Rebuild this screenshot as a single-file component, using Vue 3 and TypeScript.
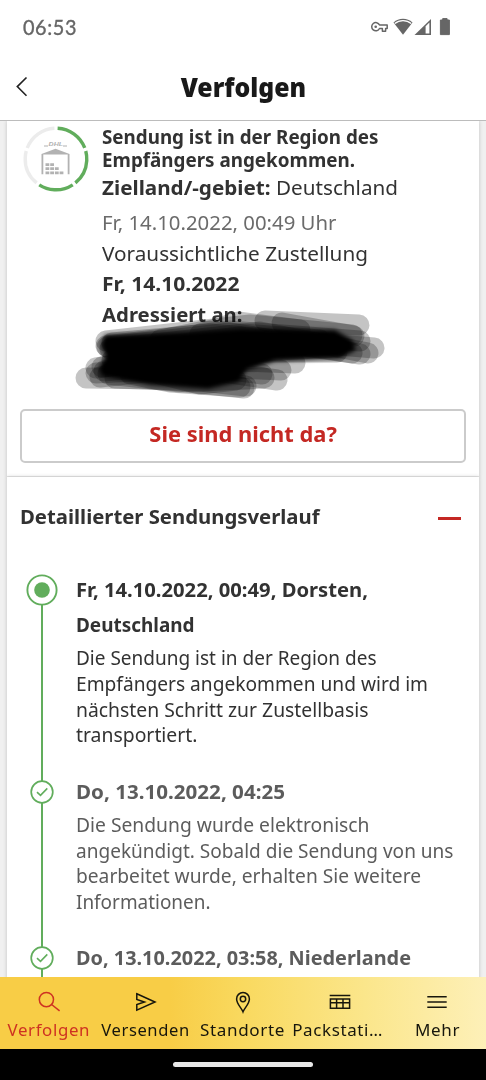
<script setup lang="ts">
import type { Directive } from 'vue'

interface TimelineLine { text: string; width: number }
interface TimelineEntry {
  current: boolean
  heading: TimelineLine[]
  body: TimelineLine[]
}

// Condenses or widens a single line of text to the given width.
const vFit: Directive<HTMLElement, number> = {
  mounted(el, binding) {
    const exact = el.getBoundingClientRect().width
    if (exact > 0) {
      el.style.transform = `scaleX(${binding.value / exact})`
    }
  },
}

const entries: TimelineEntry[] = [
  {
    current: true,
    heading: [
      { text: 'Fr, 14.10.2022, 00:49, Dorsten,', width: 292 },
      { text: 'Deutschland', width: 118.5 },
    ],
    body: [
      { text: 'Die Sendung ist in der Region des', width: 300.5 },
      { text: 'Empfängers angekommen und wird im', width: 352 },
      { text: 'nächsten Schritt zur Zustellbasis', width: 292.5 },
      { text: 'transportiert.', width: 121.5 },
    ],
  },
  {
    current: false,
    heading: [{ text: 'Do, 13.10.2022, 04:25', width: 209 }],
    body: [
      { text: 'Die Sendung wurde elektronisch', width: 293.5 },
      { text: 'angekündigt. Sobald die Sendung von uns', width: 377.5 },
      { text: 'bearbeitet wurde, erhalten Sie weitere', width: 345 },
      { text: 'Informationen.', width: 134.5 },
    ],
  },
  {
    current: false,
    heading: [{ text: 'Do, 13.10.2022, 03:58, Niederlande', width: 335 }],
    body: [],
  },
]

const strokes: string[] = [
  'M265 321 L359 325', 'M282 323 L354 336', 'M106 341 L250 325 L352 335',
  'M106 346 L230 331 L360 341', 'M112 343 L210 334 L374 348', 'M110 349 L260 332 L368 353',
  'M118 352 L240 337 L360 354', 'M107 347 L230 333 L352 353', 'M112 360 L230 352 L337 352',
  'M102 367 L220 353 L337 347', 'M104 371 L210 360 L295 363', 'M96 373 L210 367 L281 370',
  'M86 378 L160 379 L244 388', 'M100 377 L190 367 L277 380', 'M108 374 L180 382 L264 378',
  'M115 378 L200 381 L246 386', 'M130 374 L170 382 L240 387', 'M160 374 L200 384 L236 380',
  'M200 334 L238 322 L300 330', 'M160 340 L205 331 L320 340', 'M96 368 L150 360 L262 374',
]
</script>

<template>
  <div class="screen">
    <header class="top">
      <div class="status">
        <span class="clock"><span v-fit="54" class="fit">06:53</span></span>
        <svg class="status-icons" width="82" height="20" viewBox="370 17 82 20">
          <path d="M379.5 24.9 H387.2 V28.5 H385.6 V31.2 H382.4 V28.5 H379.5 A4.1 4.1 0 1 1 379.5 24.9 Z" fill="none" stroke="#666" stroke-width="1.5" stroke-linejoin="round" />
          <circle cx="375.7" cy="26.7" r="1.3" fill="#666" />
          <path d="M393.5 22.4 A14.5 14.5 0 0 1 412.5 22.4 L403 34.7 Z" fill="#666" />
          <path d="M394.8 23.6 A12.6 12.6 0 0 1 411.2 23.6" fill="none" stroke="#fff" stroke-width="1.3" />
          <path d="M414.5 35 L431 19 V35 Z" fill="#666" />
          <path d="M425.6 26.3 L429.4 22.6 V33.5 H425.6 Z" fill="#fff" />
          <path d="M440.4 20 h2.3 v-1.4 h4.4 v1.4 h2.3 v14.6 h-9 z" fill="#666" stroke="#666" stroke-linejoin="round" stroke-width="1" />
        </svg>
      </div>
      <div class="titlebar">
        <svg class="back" width="14" height="22" viewBox="0 0 14 22">
          <path d="M11.5 1.5 L2.3 10.6 L11.5 19.8" fill="none" stroke="#222" stroke-width="1.6" />
        </svg>
        <h1><span v-fit="125.5" class="fit mid">Verfolgen</span></h1>
      </div>
    </header>

    <main class="page">
      <section class="card summary">
        <div class="overview">
          <svg class="ring" width="68" height="68" viewBox="-34 -34 68 68">
            <g fill="none" stroke-width="3.4" transform="rotate(-87)">
              <circle r="30.8" pathLength="360" stroke="#61ad5c" stroke-dasharray="66 6 66 6 66 150" />
              <circle r="30.8" pathLength="360" stroke="#ececec" stroke-dasharray="0 216 66 6 66 6" />
            </g>
            <g fill="#b2b2b2">
              <path d="M-14.5 15.3 V-5 L-.5 -10.2 L13.5 -5 V15.3 H11.7 V-4.6 H-12.7 V15.3 Z" />
              <path d="M-10.5 4.3h3.8v2.8h-3.8zM-5.8 4.3h3.8v2.8h-3.8zM-10.5 8.3h3.8v2.8h-3.8zM-5.8 8.3h3.8v2.8h-3.8zM-1.1 8.3h3.8v2.8h-3.8zM-10.5 12.4h3.8v2.8h-3.8zM-5.8 12.4h3.8v2.8h-3.8zM-1.1 12.4h3.8v2.8h-3.8zM3.6 12.4h3.8v2.8h-3.8z" />
              <text x="-.2" y="-12.6" class="mark" text-anchor="middle" textLength="14.5" lengthAdjust="spacingAndGlyphs">DHL</text>
              <path d="M-12 -13.4h4v.9h-4zM7 -13.4h4v.9h-4z" />
            </g>
          </svg>
          <div class="facts">
            <p class="strong state"><span v-fit="276.5" class="fit">Sendung ist in der Region des</span></p>
            <p class="strong state"><span v-fit="253" class="fit">Empfängers angekommen.</span></p>
            <p class="target"><span v-fit="296" class="fit"><b>Zielland/-gebiet:</b> Deutschland</span></p>
            <p class="fact grey"><span v-fit="234.5" class="fit">Fr, 14.10.2022, 00:49 Uhr</span></p>
            <p class="fact"><span v-fit="266" class="fit">Voraussichtliche Zustellung</span></p>
            <p class="fact strong"><span v-fit="137.5" class="fit">Fr, 14.10.2022</span></p>
            <p class="fact strong"><span v-fit="140.5" class="fit">Adressiert an:</span></p>
          </div>
          <svg class="scribble" width="320" height="96" viewBox="70 308 320 96">
            <path v-for="(d, i) in strokes" :key="i" :d="d" />
            <path class="core" d="M105 335 L190 332 L240 329 L335 330 L352 340 L356 350 L340 358 L275 361 L247 370 L238 382 L208 389 L150 385 L102 376 L99 368 L106 356 L101 345 Z" />
          </svg>
        </div>
        <button class="away" type="button"><span v-fit="187.5" class="fit mid">Sie sind nicht da?</span></button>
      </section>

      <section class="card history">
        <div class="history-head">
          <h2><span v-fit="299.5" class="fit">Detaillierter Sendungsverlauf</span></h2>
          <span class="minus"></span>
        </div>
        <ol class="timeline">
          <li v-for="(entry, i) in entries" :key="i" :class="{ current: entry.current }">
            <div class="rail">
              <svg v-if="entry.current" width="32" height="32" viewBox="0 0 32 32">
                <circle cx="16" cy="16" r="14.6" fill="#fff" stroke="#61ad5c" stroke-width="1.9" />
                <circle cx="16" cy="16" r="7.8" fill="#61ad5c" />
              </svg>
              <svg v-else width="24" height="24" viewBox="0 0 24 24">
                <circle cx="12" cy="12" r="10.8" fill="#fff" stroke="#61ad5c" stroke-width="1.7" />
                <path d="M7 12.2 L10.5 15.4 L17.3 8.4" fill="none" stroke="#61ad5c" stroke-width="1.6" />
              </svg>
            </div>
            <div class="event">
              <p v-for="line in entry.heading" :key="line.text" class="when"><span v-fit="line.width" class="fit">{{ line.text }}</span></p>
              <div class="details">
                <p v-for="line in entry.body" :key="line.text" class="what"><span v-fit="line.width" class="fit">{{ line.text }}</span></p>
              </div>
            </div>
          </li>
        </ol>
      </section>
    </main>

    <nav class="tabs">
      <a class="tab active">
        <svg width="24" height="24" viewBox="0 0 24 24"><g fill="none" stroke="currentColor" stroke-width="1.5"><circle cx="9.4" cy="9.6" r="7.1" /><path d="M14.6 14.5 L22.6 20.9" /></g></svg>
        <span v-fit="82.5" class="fit mid">Verfolgen</span>
      </a>
      <a class="tab">
        <svg width="24" height="24" viewBox="0 0 24 24"><path d="M2.8 3.8 L21 12 L2.8 20.2 V14.6 L10.5 12 L2.8 9.4 Z" fill="none" stroke="currentColor" stroke-width="1.5" /></svg>
        <span v-fit="88.5" class="fit mid">Versenden</span>
      </a>
      <a class="tab">
        <svg width="24" height="24" viewBox="0 0 24 24"><g fill="none" stroke="currentColor" stroke-width="1.5"><path d="M12 21.8 C10.6 18 5.6 13.8 5.6 8.9 a6.4 6.4 0 0 1 12.8 0 C18.4 13.8 13.4 18 12 21.8 Z" /><circle cx="12" cy="9" r="2.7" /></g></svg>
        <span v-fit="85" class="fit mid">Standorte</span>
      </a>
      <a class="tab clipped">
        <svg width="24" height="24" viewBox="0 0 24 24"><path d="M1.7 5.6 H22.3 M2.4 9 H21.6 V18.3 H2.4 Z M2.4 12.8 H21.6 M8.6 9 V18.3 M15 9 V18.3" fill="none" stroke="currentColor" stroke-width="1.5" /></svg>
        <span v-fit="91" class="fit mid">Packstati…</span>
      </a>
      <a class="tab">
        <svg width="24" height="24" viewBox="0 0 24 24"><path d="M2.3 6.7 H21.7 M2.3 12 H21.7 M2.3 17.3 H21.7" fill="none" stroke="currentColor" stroke-width="1.4" /></svg>
        <span v-fit="45" class="fit mid">Mehr</span>
      </a>
    </nav>
    <div class="gesture"><span class="pill"></span></div>
  </div>
</template>

<style>
body {
  margin: 0;
  background: #000;
}
</style>

<style scoped>
.screen {
  width: 486px;
  height: 1080px;
  display: flex;
  flex-direction: column;
  overflow: hidden;
  background: #fff;
  color: #323232;
  font-family: "Noto Sans", "Open Sans", sans-serif;
  font-size: 20px;
}
.screen * { box-sizing: border-box; }
p, h1, h2, ol { margin: 0; padding: 0; }
.fit {
  display: inline-block;
  white-space: nowrap;
  transform-origin: left center;
}
.mid { transform-origin: center; }
.top {
  flex: none;
  height: 121px;
  border-bottom: 1px solid #bcbcbc;
  background: #fff;
}
.status {
  height: 54px;
  padding: 0 34px 0 22.5px;
  display: flex;
  justify-content: space-between;
  align-items: center;
}
.clock {
  font-family: Lato, sans-serif;
  font-size: 20.5px;
  letter-spacing: 0.6px;
  color: #666;
  -webkit-text-stroke: 0.35px #666;
}
.titlebar {
  height: 66px;
  display: grid;
  grid-template-columns: 44px 1fr 44px;
  align-items: center;
}
.back { margin-left: 15px; }
h1 {
  text-align: center;
  font-size: 27px;
  line-height: 40px;
  font-weight: 900;
  color: #191919;
}
.page {
  flex: none;
  height: 855.5px;
  padding: 0 7px;
  overflow: hidden;
  background: #f0f0f0;
}
.card {
  background: #fff;
  box-shadow: 0 0 4px rgba(0, 0, 0, 0.2);
}
.summary {
  height: 355.5px;
  padding: 5px 13px 0;
  border-bottom: 1px solid #e6e6e6;
}
.overview {
  position: relative;
  height: 282.5px;
  display: flex;
}
.ring {
  flex: none;
  margin: -1.5px 0 0 2.2px;
}
.mark {
  font: italic 900 5.4px "Liberation Sans", sans-serif;
}
.facts { padding-left: 11.6px; }
.strong { font-weight: 700; }
.state {
  font-size: 18.8px;
  line-height: 23.3px;
  height: 23.3px;
}
.target {
  line-height: 30px;
  height: 35.3px;
}
.fact {
  line-height: 30.7px;
  height: 30.7px;
}
.grey { color: #6b6b6b; }
.scribble {
  position: absolute;
  left: 50px;
  top: 182px;
}
.scribble path {
  fill: none;
  stroke: rgba(0, 0, 0, 0.23);
  stroke-width: 21px;
  stroke-linecap: round;
  stroke-linejoin: round;
}
.scribble .core {
  fill: #000;
  stroke: none;
  filter: blur(2px);
}
.away {
  display: block;
  width: 446px;
  height: 54px;
  padding: 0 0 4px;
  border: 2px solid #cbcbcb;
  border-radius: 5px;
  background: #fff;
  color: #c42823;
  font: 700 21.5px "Noto Sans", sans-serif;
}
.history {
  height: 520px;
}
.history-head {
  height: 97px;
  padding: 25px 18px 0 13.4px;
  display: flex;
  align-items: flex-start;
  justify-content: space-between;
}
h2 {
  font-size: 20px;
  line-height: 30px;
  font-weight: 700;
}
.minus {
  width: 23px;
  height: 3px;
  margin-top: 15px;
  background: #c42823;
}
.timeline {
  list-style: none;
  padding-left: 19px;
}
.timeline li {
  display: flex;
  height: 166.5px;
  color: #5c5c5c;
}
.timeline li.current {
  height: 206px;
  color: #323232;
}
.rail {
  flex: none;
  width: 32px;
  display: flex;
  flex-direction: column;
  align-items: center;
  background: linear-gradient(#61ad5c, #61ad5c) center / 2.4px 100% no-repeat;
}
.current .rail { background-position: center 16px; }
.event {
  padding-left: 18px;
  margin-top: -5px;
}
.current .event { margin-top: -0.3px; }
.when {
  font-size: 19px;
  font-weight: 700;
  line-height: 34.8px;
  height: 34.8px;
}
.details { padding-top: 2.6px; }
.what {
  font-size: 19.3px;
  line-height: 25.7px;
  height: 25.7px;
}
.tabs {
  flex: none;
  height: 72.5px;
  display: grid;
  grid-template-columns: repeat(5, 97.2px);
  background: linear-gradient(90deg, #f8cd46 0%, #f8cd46 35%, #f9d95f 50%, #fbe68b 75%, #fdf0b8 100%);
}
.tab {
  display: flex;
  flex-direction: column;
  align-items: center;
  padding-top: 13.5px;
  color: #17160c;
  font-size: 16.3px;
  line-height: 24px;
  letter-spacing: 0.6px;
}
.tab .fit { margin-top: 4px; }
.tab.clipped .fit { margin-right: 6px; }
.tab.active { color: #ce3222; }
.gesture {
  flex: 1;
  display: flex;
  justify-content: center;
  padding-top: 13px;
  background: #000;
}
.pill {
  width: 140px;
  height: 5px;
  border-radius: 3px;
  background: #e8e8e8;
}
</style>
